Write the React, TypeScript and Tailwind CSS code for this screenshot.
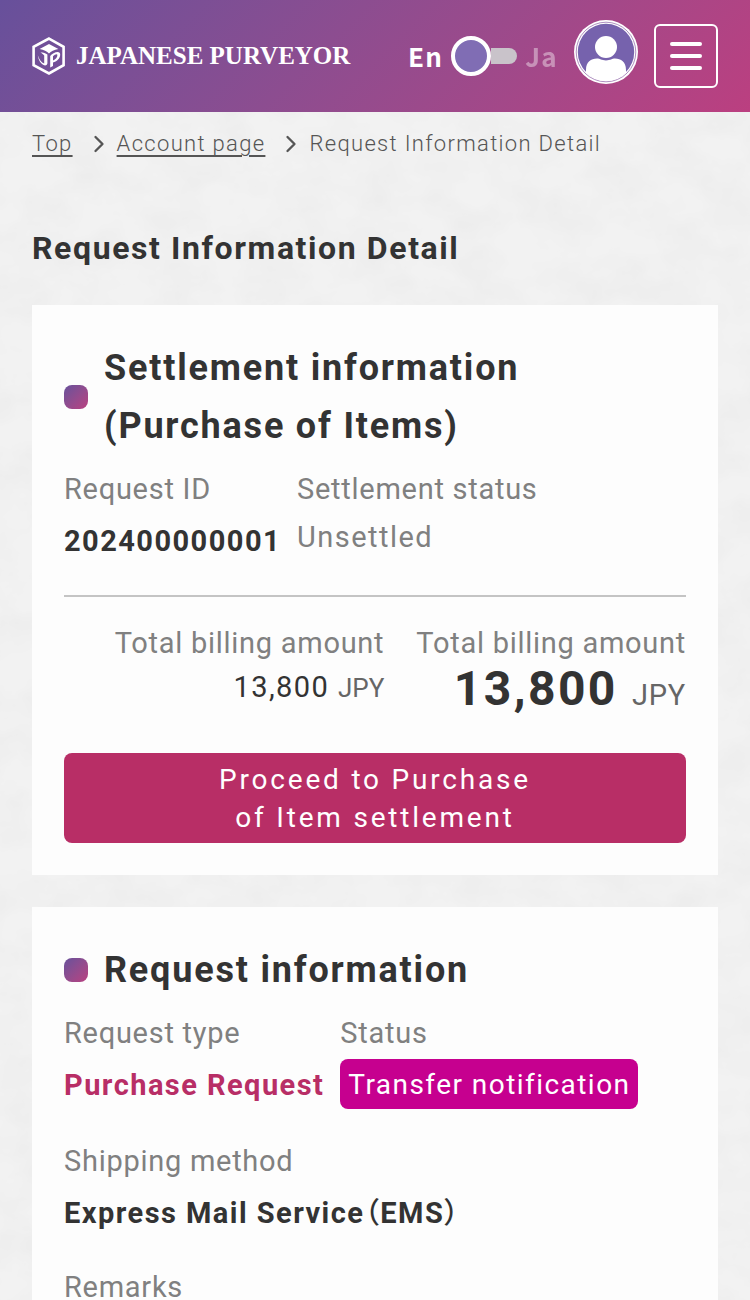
import React, { useState } from 'react';
import { ChevronRight } from 'lucide-react';
import clsx from 'clsx';

interface SectionProps {
    title: React.ReactNode;
    children: React.ReactNode;
}

interface FieldProps {
    label: string;
    children: React.ReactNode;
    className?: string;
}

const LogoMark = () => (
    <svg viewBox="0 0 34 38" className="w-[34px] h-[38px] shrink-0" fill="none" aria-hidden="true">
        <path d="M17 1.6 L31.6 9.8 V28.2 L17 36.4 L1.6 28.2 V9.8 Z" stroke="#fff" strokeWidth="2.6" />
        <path d="M17 7 L26.4 12 C22 12.8 19 14.2 17 16.6 C15 14.2 12 12.8 7.6 12 Z" fill="#fff" />
        <path d="M8.4 15.4 C11.4 15.4 13.8 16 15.4 17.6 V26.6 C14.6 29.4 11.4 28.8 9 26 C7 23.6 6.2 21 5.8 18.2 C7 21.6 9.4 25.8 12.2 26.4 V18.4 C11 17 9.8 16.2 8.4 15.4 Z" fill="#fff" />
        <path fillRule="evenodd" d="M18.2 30.6 V19 C20.6 15.8 28.4 12.6 28.2 17.8 C28 22 24.6 24.6 21 25.6 V29 Z M21 23.4 C23.6 22.4 25.4 20.2 25.4 18 C25.4 16.4 22.6 17.4 21 19.2 Z" fill="#fff" />
    </svg>
);

const UserAvatar = () => (
    <svg viewBox="0 0 64 64" className="size-16" aria-hidden="true">
        <defs>
            <clipPath id="avatar-clip">
                <circle cx="32" cy="32" r="29" />
            </clipPath>
        </defs>
        <circle cx="32" cy="32" r="32" fill="#fff" />
        <circle cx="32" cy="32" r="29.8" fill="none" stroke="#9a72b0" strokeWidth="0.8" />
        <circle cx="32" cy="32" r="28.2" fill="#7662ad" />
        <g clipPath="url(#avatar-clip)" fill="#fff">
            <circle cx="32" cy="27" r="11" />
            <path d="M12 64 V50 C12 42 17 38.6 23 38.6 C26 38.6 27.4 40.4 32 40.4 C36.6 40.4 38 38.6 41 38.6 C47 38.6 52 42 52 50 V64 Z" />
        </g>
    </svg>
);

// Soft paper grain behind the whole page
const PaperTexture = () => (
    <svg className="absolute inset-0 -z-10 w-full h-full" aria-hidden="true">
        <filter id="paper">
            <feTurbulence type="fractalNoise" baseFrequency="0.02 0.026" numOctaves="4" seed="12" />
            <feColorMatrix values="0 0 0 0 0.8  0 0 0 0 0.8  0 0 0 0 0.8  0.9 0 0 0 -0.3" />
        </filter>
        <rect width="100%" height="100%" filter="url(#paper)" />
    </svg>
);

const LanguageSwitch = () => {
    const [isJapanese, setIsJapanese] = useState(false);

    return (
        <label className="flex items-center gap-2 cursor-pointer font-['Noto_Sans_CJK_JP',sans-serif] text-[26px] leading-10 font-bold tracking-wider text-white">
            <span className={clsx(isJapanese && 'opacity-40')}>En</span>
            <span className={clsx('flex items-center', isJapanese && 'flex-row-reverse')}>
                <input
                    type="checkbox"
                    role="switch"
                    aria-label="Language"
                    checked={isJapanese}
                    onChange={e => setIsJapanese(e.target.checked)}
                    className="appearance-none size-10 rounded-full border-4 border-white bg-[#806db4] cursor-pointer"
                />
                <span className={clsx('w-[26px] h-4 bg-[#c9c3ca]', isJapanese ? 'rounded-l-full' : 'rounded-r-full')} />
            </span>
            <span className={clsx(!isJapanese && 'opacity-40')}>Ja</span>
        </label>
    );
};

const Header = () => (
    <header className="flex items-center justify-between h-28 px-8 bg-linear-135 from-[#67509b] to-[#bb3f80]">
        <a href="#top" className="flex items-center gap-2.5 text-white">
            <LogoMark />
            <span className="font-['Liberation_Serif',serif] text-[25px] leading-8 font-bold whitespace-nowrap">JAPANESE PURVEYOR</span>
        </a>
        <div className="flex items-center gap-4">
            <LanguageSwitch />
            <a href="#account" aria-label="Account" className="mb-2">
                <UserAvatar />
            </a>
            <button type="button" aria-label="Menu" className="flex flex-col items-center justify-center gap-2 size-16 rounded-md border-2 border-white">
                <span className="w-8 h-1 rounded-sm bg-white" />
                <span className="w-8 h-1 rounded-sm bg-white" />
                <span className="w-8 h-1 rounded-sm bg-white" />
            </button>
        </div>
    </header>
);

const Breadcrumb = () => (
    <nav aria-label="Breadcrumb" className="px-8 pt-4">
        <ol className="flex items-center text-[22px] leading-8 font-light tracking-[0.06em] text-[#555]">
            <li><a href="#top" className="underline underline-offset-4">Top</a></li>
            <li className="flex items-center">
                <ChevronRight className="size-7 ml-3 mr-1" strokeWidth={2} />
                <a href="#account" className="underline underline-offset-4">Account page</a>
            </li>
            <li className="flex items-center">
                <ChevronRight className="size-7 ml-3 mr-1" strokeWidth={2} />
                <span aria-current="page">Request Information Detail</span>
            </li>
        </ol>
    </nav>
);

const Section = ({ title, children }: SectionProps) => (
    <section className="px-8 pt-[34px] pb-8 bg-[#fdfdfd]">
        <h2 className="flex items-center gap-4 text-4xl leading-[58px] font-bold tracking-wider">
            <span className="size-6 shrink-0 rounded-lg bg-linear-135 from-[#67509b] to-[#b93f80]" />
            <span>{title}</span>
        </h2>
        {children}
    </section>
);

const Field = ({ label, children, className }: FieldProps) => (
    <div className={className}>
        <dt className="tracking-wide text-[#808080]">{label}</dt>
        <dd className="tracking-wider">{children}</dd>
    </div>
);

export default function App() {
    return (
        <div className="relative isolate min-h-screen bg-[#f2f2f2] font-[Roboto,'Noto_Sans_CJK_JP',sans-serif] text-[#333]">
            <PaperTexture />
            <Header />
            <Breadcrumb />
            <main className="px-8 pt-16">
                <h1 className="text-[32px] leading-12 font-bold tracking-wider">Request Information Detail</h1>

                <div className="flex flex-col gap-8 pt-[33px]">
                    <Section title={<>Settlement information<br />(Purchase of Items)</>}>
                        <dl className="flex gap-4 pt-3 pb-8 border-b-2 border-[#c4c4c4] text-[29px] leading-11">
                            <Field label="Request ID">
                                <p className="pt-2 font-bold">202400000001</p>
                            </Field>
                            <Field label="Settlement status">
                                <p className="pt-1 text-[#808080]">Unsettled</p>
                            </Field>
                        </dl>
                        <dl className="flex justify-end gap-8 pt-6 text-[29px] leading-11 text-right">
                            <Field label="Total billing amount">
                                13,800 <span className="text-[26px] tracking-normal text-[#666]">JPY</span>
                            </Field>
                            <Field label="Total billing amount">
                                <strong className="text-5xl font-bold tracking-wider">{'13,800 '}</strong>
                                <span className="tracking-wide text-[#666]">JPY</span>
                            </Field>
                        </dl>
                        <button type="button" className="w-full mt-9 pt-2 pb-1.5 rounded-lg bg-[#b82e66] text-[28px] leading-[38px] tracking-widest text-white">
                            Proceed to Purchase<br />of Item settlement
                        </button>
                    </Section>

                    <Section title="Request information">
                        <dl className="flex flex-wrap gap-x-4 gap-y-[30px] pt-3 text-[29px] leading-11">
                            <Field label="Request type">
                                <p className="pt-2 font-bold text-[#b82e66]">Purchase Request</p>
                            </Field>
                            <Field label="Status">
                                <p className="w-fit mt-1 px-2 pt-1 pb-0.5 rounded-lg bg-[#c6008f] text-[28px] text-white">Transfer notification</p>
                            </Field>
                            <Field label="Shipping method" className="w-full">
                                <p className="pt-2 font-bold">
                                    Express Mail Service<span className="font-['Noto_Sans_CJK_JP',sans-serif] leading-none font-medium [font-feature-settings:'palt']">（</span>EMS<span className="font-['Noto_Sans_CJK_JP',sans-serif] leading-none font-medium [font-feature-settings:'palt']">）</span>
                                </p>
                            </Field>
                            <Field label="Remarks" className="w-full">{null}</Field>
                        </dl>
                    </Section>
                </div>
            </main>
        </div>
    );
}
